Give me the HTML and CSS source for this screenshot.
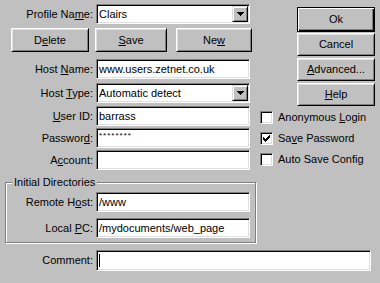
FILE: index.html
```html
<!DOCTYPE html>
<html>
<head>
<meta charset="utf-8">
<title>Profile</title>
<link rel="stylesheet" href="styles.css">
</head>
<body>
<div class="dialog">
  <div class="top">
    <div class="left">
      <div class="row">
        <span class="label">Profile Na<u>m</u>e:</span>
        <div class="field combo">
          <span class="value">Clairs</span>
          <span class="drop"><svg width="7" height="4" viewBox="0 0 7 4" shape-rendering="crispEdges"><rect x="0" y="0" width="7" height="1"/><rect x="1" y="1" width="5" height="1"/><rect x="2" y="2" width="3" height="1"/><rect x="3" y="3" width="1" height="1"/></svg></span>
        </div>
      </div>
      <div class="btnrow">
        <button class="btn b-delete">D<u>e</u>lete</button>
        <button class="btn b-save"><u>S</u>ave</button>
        <button class="btn b-new">Ne<u>w</u></button>
      </div>
      <div class="row r-hostname">
        <span class="label">Host <u>N</u>ame:</span>
        <div class="field"><span class="value">www.users.zetnet.co.uk</span></div>
      </div>
      <div class="row r-hosttype">
        <span class="label">Host <u>T</u>ype:</span>
        <div class="field combo">
          <span class="value">Automatic detect</span>
          <span class="drop"><svg width="7" height="4" viewBox="0 0 7 4" shape-rendering="crispEdges"><rect x="0" y="0" width="7" height="1"/><rect x="1" y="1" width="5" height="1"/><rect x="2" y="2" width="3" height="1"/><rect x="3" y="3" width="1" height="1"/></svg></span>
        </div>
      </div>
      <div class="row r-user">
        <span class="label"><u>U</u>ser ID:</span>
        <div class="field"><span class="value">barrass</span></div>
      </div>
      <div class="row r-pass">
        <span class="label">Passwor<u>d</u>:</span>
        <div class="field f-pass"><span class="value pw">********</span></div>
      </div>
      <div class="row r-account">
        <span class="label">A<u>c</u>count:</span>
        <div class="field"></div>
      </div>
    </div>
    <div class="right">
      <div class="actions">
        <button class="btn default">Ok</button>
        <button class="btn b-cancel">Cancel</button>
        <button class="btn b-adv"><u>A</u>dvanced...</button>
        <button class="btn b-help"><u>H</u>elp</button>
      </div>
      <div class="checks">
        <div class="check">
          <span class="box"></span>
          <span>Anonymous <u>L</u>ogin</span>
        </div>
        <div class="check">
          <span class="box"><svg width="7" height="7" viewBox="0 0 7 7" shape-rendering="crispEdges"><rect x="6" y="0" width="1" height="1"/><rect x="5" y="1" width="2" height="1"/><rect x="0" y="2" width="1" height="1"/><rect x="4" y="2" width="3" height="1"/><rect x="0" y="3" width="2" height="1"/><rect x="3" y="3" width="3" height="1"/><rect x="0" y="4" width="5" height="1"/><rect x="1" y="5" width="3" height="1"/><rect x="2" y="6" width="1" height="1"/></svg></span>
          <span>Sa<u>v</u>e Password</span>
        </div>
        <div class="check">
          <span class="box"></span>
          <span>Auto Save Config</span>
        </div>
      </div>
    </div>
  </div>
  <div class="group">
    <span class="legend">Initial Directories</span>
    <div class="row">
      <span class="label glabel">Remote H<u>o</u>st:</span>
      <div class="field"><span class="value">/www</span></div>
    </div>
    <div class="row r-local">
      <span class="label glabel">Local <u>P</u>C:</span>
      <div class="field"><span class="value">/mydocuments/web_page</span></div>
    </div>
  </div>
  <div class="row r-comment">
    <span class="label">Comment:</span>
    <div class="field f-comment"><span class="caret"></span></div>
  </div>
</div>
</body>
</html>
```

FILE: styles.css
```css
* {
  box-sizing: border-box;
  margin: 0;
  padding: 0;
}

html,
body {
  width: 380px;
  height: 283px;
  overflow: hidden;
}

body {
  background: #c0c0c0;
  font-family: "Liberation Sans", Arial, sans-serif;
  font-size: 11px;
  line-height: 13px;
  color: #000;
}

u {
  text-decoration: underline;
  text-underline-offset: 1px;
}

.dialog {
  display: flex;
  flex-direction: column;
}

.top {
  display: flex;
}

.left {
  width: 258px;
  display: flex;
  flex-direction: column;
  padding-top: 4px;
}

.right {
  flex: 1;
  display: flex;
  flex-direction: column;
  padding-top: 7px;
}

.row {
  display: flex;
  align-items: center;
  height: 20px;
  flex: none;
}

.label {
  width: 93px;
  margin-right: 3px;
  text-align: right;
  white-space: nowrap;
}

.glabel {
  width: 87px;
}

.field {
  width: 154px;
  height: 20px;
  background: #fff;
  border: 1px solid;
  border-color: #808080 #fff #fff #808080;
  box-shadow: inset 1px 1px #000, inset -1px -1px #dfdfdf;
  padding: 1px 1px 1px 2px;
  display: flex;
  align-items: center;
  white-space: nowrap;
  overflow: hidden;
}

.f-pass {
  align-items: flex-start;
  padding-top: 3px;
}

.value.pw {
  font-size: 8px;
  line-height: 8px;
  letter-spacing: 1px;
}

.drop {
  margin-left: auto;
  width: 16px;
  height: 16px;
  flex: none;
  background: #c0c0c0;
  border: 1px solid;
  border-color: #dfdfdf #000 #000 #dfdfdf;
  box-shadow: inset 1px 1px #fff, inset -1px -1px #808080;
  display: flex;
  align-items: center;
  justify-content: center;
}

.drop svg {
  display: block;
  fill: #000;
}

.btn {
  font: inherit;
  color: #000;
  background: #c0c0c0;
  border: 1px solid;
  border-color: #fff #000 #000 #fff;
  box-shadow: inset 1px 1px #dfdfdf, inset -1px -1px #808080;
  height: 23px;
  display: flex;
  align-items: center;
  justify-content: center;
  flex: none;
}

.btnrow {
  display: flex;
  height: 24px;
  margin-top: 4px;
}

.btnrow .btn {
  height: 24px;
}

.b-delete {
  margin-left: 11px;
  width: 78px;
}

.b-save {
  margin-left: 6px;
  width: 72px;
}

.b-new {
  margin-left: 9px;
  width: 76px;
}

.r-hostname {
  margin-top: 7px;
}

.r-hosttype {
  margin-top: 4px;
}

.r-user {
  margin-top: 3px;
}

.r-pass,
.r-account {
  margin-top: 2px;
}

.actions {
  margin-left: 39px;
  width: 78px;
  display: flex;
  flex-direction: column;
}

.actions .btn {
  width: 78px;
}

.btn.default {
  height: 25px;
  border-color: #000;
  box-shadow: inset 1px 1px #fff, inset -1px -1px #000, inset -2px -2px #808080;
}

.b-cancel {
  margin-top: 1px;
}

.b-adv,
.b-help {
  margin-top: 2px;
}

.checks {
  margin-top: 5px;
  margin-left: 2px;
  display: flex;
  flex-direction: column;
  gap: 8px;
}

.check {
  display: flex;
  align-items: center;
  height: 13px;
  gap: 5px;
  white-space: nowrap;
}

.box {
  width: 13px;
  height: 13px;
  flex: none;
  background: #fff;
  border: 1px solid;
  border-color: #808080 #fff #fff #808080;
  box-shadow: inset 1px 1px #000, inset -1px -1px #dfdfdf;
  display: flex;
  align-items: center;
  justify-content: center;
}

.box svg {
  display: block;
  fill: #000;
}

.group {
  position: relative;
  margin: 12px 0 0 5px;
  width: 251px;
  height: 61px;
  border: 1px solid #808080;
  box-shadow: 1px 1px #fff, inset 1px 1px #fff;
  padding-top: 9px;
  display: flex;
  flex-direction: column;
}

.legend {
  position: absolute;
  left: 6px;
  top: -7px;
  padding: 0 2px;
  background: #c0c0c0;
  line-height: 13px;
  white-space: nowrap;
}

.r-local {
  margin-top: 6px;
}

.r-comment {
  margin-top: 7px;
  height: 21px;
}

.f-comment {
  width: 275px;
  height: 21px;
}

.caret {
  width: 1px;
  height: 13px;
  background: #000;
}
```
